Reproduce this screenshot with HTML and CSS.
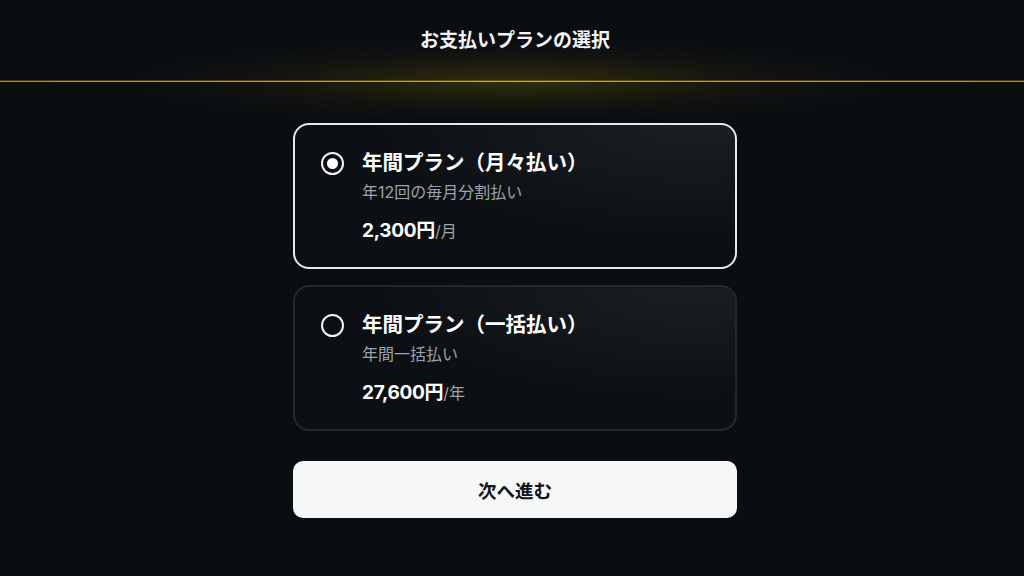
FILE: index.html
```html
<!DOCTYPE html>
<html lang="ja">
<head>
  <meta charset="UTF-8">
  <meta name="viewport" content="width=device-width, initial-scale=1.0">
  <title>お支払いプランの選択</title>
  <link rel="stylesheet" href="styles.css">
</head>
<body>
  <header class="topbar">
    <h1 class="topbar-title">お支払いプランの選択</h1>
  </header>
  <div class="topbar-line"></div>

  <main class="plans">
    <!-- Monthly -->
    <label class="plan-card selected">
      <input type="radio" name="plan" value="monthly" checked>
      <span class="radio-mark"></span>
      <span class="plan-body">
        <span class="plan-name">年間プラン（月々払い）</span>
        <span class="plan-desc">年12回の毎月分割払い</span>
        <span class="plan-price">2,300円<small>/月</small></span>
      </span>
    </label>

    <!-- Yearly -->
    <label class="plan-card">
      <input type="radio" name="plan" value="yearly">
      <span class="radio-mark"></span>
      <span class="plan-body">
        <span class="plan-name">年間プラン（一括払い）</span>
        <span class="plan-desc">年間一括払い</span>
        <span class="plan-price">27,600円<small>/年</small></span>
      </span>
    </label>

    <button class="next-button">次へ進む</button>
  </main>

  <script>
    // Move the selected style to the clicked card
    const cards = document.querySelectorAll('.plan-card');
    cards.forEach(card => {
      card.querySelector('input').addEventListener('change', () => {
        cards.forEach(c => c.classList.remove('selected'));
        card.classList.add('selected');
      });
    });
  </script>
</body>
</html>
```

FILE: styles.css
```css
* {
  box-sizing: border-box;
}

body {
  margin: 0;
  min-height: 576px;
  background-color: #0a0e11;
  color: #ffffff;
  font-family: "Inter", "Noto Sans CJK JP", sans-serif;
}

.topbar {
  height: 81px;
  padding-left: 6px;
  display: flex;
  align-items: center;
  justify-content: center;
}

.topbar-title {
  margin: 0;
  font-size: 19px;
  font-weight: 700;
  line-height: 28px;
  color: #f4f5f6;
}

/* gold line with a soft glow */
.topbar-line {
  position: relative;
  height: 1px;
  background: linear-gradient(90deg, #d08000, #e0a000 30%, #d8d000 50%, #e0a000 70%, #d08000);
  box-shadow: 0 -1px 0 rgba(170, 120, 0, 0.45);
}

.topbar-line::after {
  content: "";
  position: absolute;
  left: 0;
  right: 0;
  top: -40px;
  height: 80px;
  background: radial-gradient(ellipse 380px 40px at 50% 50%, rgba(150, 140, 0, 0.26), rgba(130, 85, 0, 0.09) 60%, transparent 100%);
  pointer-events: none;
}

.plans {
  width: 444px;
  margin: 41px auto 0;
  position: relative;
  left: 3px;
  display: flex;
  flex-direction: column;
  gap: 16px;
}

.plan-card {
  position: relative;
  display: flex;
  align-items: flex-start;
  gap: 18px;
  height: 146px;
  padding: 24px 26px 0;
  border: 2px solid #23282d;
  border-radius: 16px;
  background: radial-gradient(ellipse 420px 150px at 90% 0%, #1a1f24, #0c1014 75%);
  cursor: pointer;
}

.plan-card.selected {
  border-color: #e6e8ea;
}

.plan-card input {
  display: none;
}

.radio-mark {
  flex-shrink: 0;
  width: 23px;
  height: 23px;
  margin-top: 3px;
  border: 2.5px solid #f2f3f4;
  border-radius: 50%;
  display: flex;
  align-items: center;
  justify-content: center;
}

.plan-card.selected .radio-mark::after {
  content: "";
  width: 11px;
  height: 11px;
  border-radius: 50%;
  background-color: #ffffff;
}

.plan-body {
  display: flex;
  flex-direction: column;
}

.plan-name {
  font-size: 20.5px;
  font-weight: 700;
  line-height: 28px;
}

.plan-desc {
  margin-top: 3px;
  font-size: 16px;
  line-height: 24px;
  color: #9ea3a8;
}

.plan-price {
  margin-top: 13px;
  font-size: 19px;
  font-weight: 700;
  line-height: 28px;
  letter-spacing: -0.3px;
}

.plan-price small {
  font-size: 16px;
  font-weight: 400;
  letter-spacing: 0;
  color: #9ea3a8;
}

.next-button {
  margin-top: 14px;
  height: 57px;
  border: none;
  border-radius: 10px;
  background-color: #f6f8f8;
  color: #111418;
  font-family: inherit;
  font-size: 18.5px;
  font-weight: 700;
  cursor: pointer;
}
```
